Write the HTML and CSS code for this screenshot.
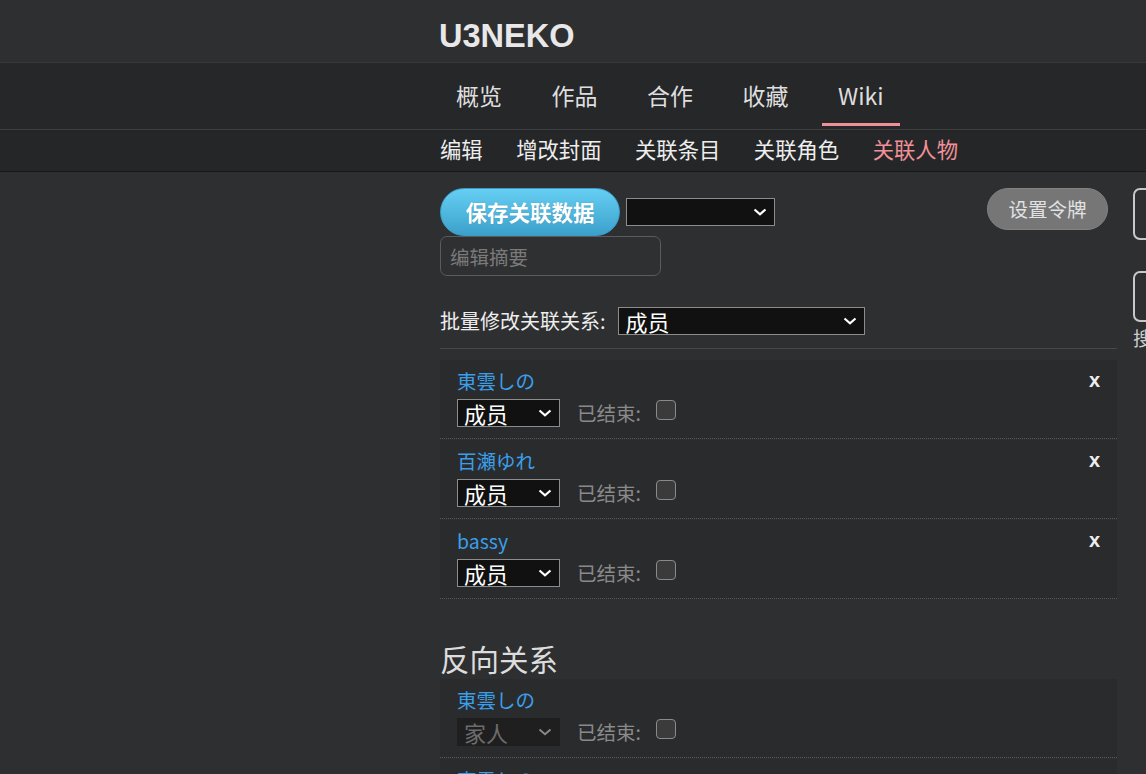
FILE: index.html
```html
<!DOCTYPE html>
<html lang="zh">
<head>
<meta charset="utf-8">
<title>U3NEKO - 关联人物</title>
<link rel="stylesheet" href="styles.css">
</head>
<body>
<header class="site-header">
  <div class="logo">U3NEKO</div>
</header>
<nav class="nav-main">
  <a class="nav-item">概览</a>
  <a class="nav-item">作品</a>
  <a class="nav-item">合作</a>
  <a class="nav-item">收藏</a>
  <a class="nav-item active">Wiki</a>
</nav>
<nav class="nav-sub">
  <a class="sub-item">编辑</a>
  <a class="sub-item">增改封面</a>
  <a class="sub-item">关联条目</a>
  <a class="sub-item">关联角色</a>
  <a class="sub-item active">关联人物</a>
</nav>
<div class="page">
  <main class="main">
    <div class="toolbar">
      <button class="btn-save">保存关联数据</button>
      <div class="select-wrap sel-empty">
        <select class="sel"><option></option></select>
        <svg class="chev" viewBox="0 0 14 8"><path d="M1.5 1.5 L7 6.3 L12.5 1.5"/></svg>
      </div>
      <button class="btn-token">设置令牌</button>
    </div>
    <input class="summary" type="text" placeholder="编辑摘要">
    <div class="bulk">
      <span class="bulk-label">批量修改关联关系:</span>
      <div class="select-wrap sel-bulk">
        <select class="sel"><option>成员</option></select>
        <svg class="chev" viewBox="0 0 14 8"><path d="M1.5 1.5 L7 6.3 L12.5 1.5"/></svg>
      </div>
    </div>
    <hr class="divider">
    <ul class="rel-list">
      <li class="rel-row">
        <div class="rel-top"><a class="rel-name">東雲しの</a><span class="rel-remove">x</span></div>
        <div class="rel-ctrl">
          <div class="select-wrap sel-row">
            <select class="sel"><option>成员</option></select>
            <svg class="chev" viewBox="0 0 14 8"><path d="M1.5 1.5 L7 6.3 L12.5 1.5"/></svg>
          </div>
          <span class="ended">已结束:</span>
          <input class="chk" type="checkbox">
        </div>
      </li>
      <li class="rel-row">
        <div class="rel-top"><a class="rel-name">百瀬ゆれ</a><span class="rel-remove">x</span></div>
        <div class="rel-ctrl">
          <div class="select-wrap sel-row">
            <select class="sel"><option>成员</option></select>
            <svg class="chev" viewBox="0 0 14 8"><path d="M1.5 1.5 L7 6.3 L12.5 1.5"/></svg>
          </div>
          <span class="ended">已结束:</span>
          <input class="chk" type="checkbox">
        </div>
      </li>
      <li class="rel-row">
        <div class="rel-top"><a class="rel-name">bassy</a><span class="rel-remove">x</span></div>
        <div class="rel-ctrl">
          <div class="select-wrap sel-row">
            <select class="sel"><option>成员</option></select>
            <svg class="chev" viewBox="0 0 14 8"><path d="M1.5 1.5 L7 6.3 L12.5 1.5"/></svg>
          </div>
          <span class="ended">已结束:</span>
          <input class="chk" type="checkbox">
        </div>
      </li>
    </ul>
    <h2 class="section-title">反向关系</h2>
    <ul class="rel-list">
      <li class="rel-row">
        <div class="rel-top"><a class="rel-name">東雲しの</a></div>
        <div class="rel-ctrl">
          <div class="select-wrap sel-row disabled">
            <select class="sel" disabled><option>家人</option></select>
            <svg class="chev" viewBox="0 0 14 8"><path d="M1.5 1.5 L7 6.3 L12.5 1.5"/></svg>
          </div>
          <span class="ended">已结束:</span>
          <input class="chk" type="checkbox">
        </div>
      </li>
      <li class="rel-row">
        <div class="rel-top"><a class="rel-name">東雲しの</a></div>
        <div class="rel-ctrl">
          <div class="select-wrap sel-row disabled">
            <select class="sel" disabled><option>家人</option></select>
            <svg class="chev" viewBox="0 0 14 8"><path d="M1.5 1.5 L7 6.3 L12.5 1.5"/></svg>
          </div>
          <span class="ended">已结束:</span>
          <input class="chk" type="checkbox">
        </div>
      </li>
    </ul>
  </main>
  <aside class="side">
    <div class="side-box"></div>
    <div class="side-box second"></div>
    <div class="side-label">搜索</div>
  </aside>
</div>
</body>
</html>
```

FILE: styles.css
```css
html, body {
  overflow: hidden;
}
body {
  margin: 0;
  background: #2e2f31;
  color: #dddddd;
  font-family: "Noto Sans CJK SC", "Noto Sans", sans-serif;
  font-size: 19.5px;
}
a { text-decoration: none; color: inherit; cursor: pointer; }

.site-header {
  height: 63px;
  box-sizing: border-box;
  border-bottom: 1px solid #37383a;
  padding: 20px 0 0 439px;
}
.logo {
  font-family: "Liberation Sans", Arial, sans-serif;
  font-weight: bold;
  font-size: 32.5px;
  line-height: 33px;
  color: #e8e8e8;
}

.nav-main {
  display: flex;
  gap: 17.5px;
  height: 67px;
  box-sizing: border-box;
  padding-left: 440px;
  background: #262729;
  border-bottom: 1px solid #3d3e40;
}
.nav-item {
  padding: 5px 16px 0;
  line-height: 55px;
  height: 63px;
  box-sizing: border-box;
  font-size: 23px;
  color: #dedede;
  border-bottom: 3px solid transparent;
}
.nav-item.active {
  border-bottom-color: #ee9099;
}

.nav-sub {
  display: flex;
  gap: 33.5px;
  height: 42px;
  box-sizing: border-box;
  padding: 0 0 3px 440px;
  background: #252628;
  border-bottom: 1px solid #17181a;
}
.sub-item {
  font-size: 21.33px;
  line-height: 38px;
  color: #eeeeee;
}
.sub-item.active { color: #f09199; }

.page {
  display: flex;
  padding: 16px 0 0 440px;
}
.main {
  width: 677px;
  flex-shrink: 0;
}

.toolbar {
  display: flex;
  align-items: center;
  height: 48px;
}
.btn-save {
  height: 48px;
  width: 180px;
  padding: 0;
  border: 1px solid #3a9bc6;
  border-radius: 24px;
  background: linear-gradient(#66cef3, #3ba1cb);
  color: #ffffff;
  font-family: inherit;
  font-weight: bold;
  font-size: 21.5px;
  line-height: 46px;
  text-shadow: 0 0 1px rgba(0,0,0,0.25);
}
.btn-token {
  align-self: flex-start;
  margin: 0 9px 0 auto;
  height: 42px;
  width: 121px;
  padding: 0;
  border: 1px solid #828282;
  border-radius: 21px;
  background: #767676;
  color: #e2e2e2;
  font-family: inherit;
  font-size: 19.5px;
  line-height: 40px;
}

.select-wrap {
  position: relative;
  height: 28px;
  box-sizing: border-box;
}
.sel {
  appearance: none;
  -webkit-appearance: none;
  display: block;
  width: 100%;
  height: 28px;
  box-sizing: border-box;
  margin: 0;
  border: 1px solid #8c8c8c;
  border-radius: 0;
  background: #111111;
  color: #ffffff;
  font-family: inherit;
  font-size: 22px;
  line-height: 26px;
  padding: 0 0 0 6px;
}
.chev {
  position: absolute;
  right: 8px;
  top: 10px;
  width: 14px;
  height: 8px;
  fill: none;
  stroke: #ffffff;
  stroke-width: 2.2;
  pointer-events: none;
}
.sel-empty { width: 149px; margin-left: 6px; }
.sel-bulk { width: 247px; margin-left: 12px; }
.sel-bulk .sel { padding-left: 7px; }
.sel-row { width: 103px; }
.disabled .sel {
  background: #1b1b1b;
  border-color: #1b1b1b;
  color: #888888;
}
.disabled .chev { stroke: #8a8a8a; stroke-width: 1.8; }

.summary {
  display: block;
  width: 221px;
  height: 40px;
  box-sizing: border-box;
  margin: 0;
  padding: 0 9px;
  border: 1px solid #5a5b5d;
  border-radius: 7px;
  background: #2f3032;
  color: #dddddd;
  font-family: inherit;
  font-size: 19.5px;
}
.summary::placeholder { color: #7a7a7a; }

.bulk {
  display: flex;
  align-items: center;
  margin-top: 31px;
  height: 28px;
}
.bulk-label {
  font-size: 20px;
  color: #eeeeee;
  line-height: 28px;
}

.divider {
  margin: 13px 0 11px;
  border: 0;
  border-top: 1px solid #47484a;
  height: 0;
}

.rel-list {
  list-style: none;
  margin: 0;
  padding: 0;
}
.rel-row {
  margin-top: 1px;
  padding: 10px 17px 11px;
  background: #2a2b2d;
  border-bottom: 1px dotted #58595b;
}
.rel-top {
  display: flex;
  justify-content: space-between;
  height: 21px;
  line-height: 21px;
}
.rel-name {
  color: #3a9fe8;
  font-size: 19.5px;
  line-height: 21px;
}
.rel-remove {
  font-family: "Liberation Sans", Arial, sans-serif;
  font-weight: bold;
  font-size: 20px;
  line-height: 21px;
  color: #eeeeee;
}
.rel-ctrl {
  display: flex;
  align-items: center;
  margin-top: 8px;
  height: 28px;
}
.ended {
  margin-left: 17px;
  color: #8a8a8a;
  line-height: 28px;
}
.chk {
  appearance: none;
  -webkit-appearance: none;
  align-self: flex-start;
  margin: 1px 0 0 15px;
  width: 20px;
  height: 20px;
  box-sizing: border-box;
  border: 1.5px solid #8a8a8a;
  border-radius: 4px;
  background: #3b3b3b;
}

.section-title {
  margin: 41px 0 3px;
  font-size: 29.5px;
  line-height: 36px;
  font-weight: normal;
  color: #dddddd;
}

.side {
  flex-shrink: 0;
  width: 260px;
  margin-left: 16px;
}
.side-box {
  height: 52px;
  box-sizing: border-box;
  border: 2px solid #c8c8c8;
  border-radius: 7px;
}
.side-box.second {
  margin-top: 31px;
  height: 51px;
}
.side-label {
  margin-top: 5px;
  line-height: 22px;
  color: #cccccc;
}
```
